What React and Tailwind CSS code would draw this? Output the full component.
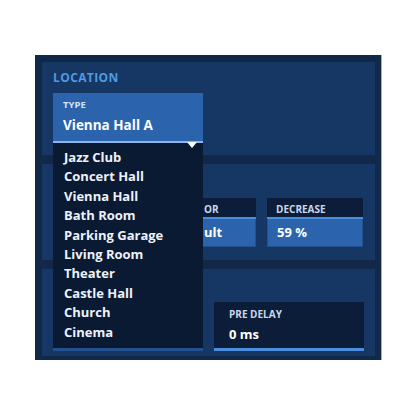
import React from "react";

const items = ["Jazz Club","Concert Hall","Vienna Hall","Bath Room","Parking Garage","Living Room","Theater","Castle Hall","Church","Cinema"];

export default function App() {
  const font = { fontFamily: "'Open Sans', 'Noto Sans', sans-serif" };
  return (
    <div className="w-[416px] h-[416px] bg-white pt-[55px] pl-[35px]" style={font}>
      <div className="w-[347px] h-[305px] bg-[#112849] border-r border-[#9fb2cc] pt-[7px] pl-[7px] pr-[6px] flex flex-col gap-[9px]">
        {/* Location */}
        <div className="h-[93px] bg-[#163663] px-[11px] pt-[9px] relative z-10">
          <div className="text-[12px] font-bold text-[#4f9ae6] leading-[14px] tracking-[0.4px]">LOCATION</div>
          <div className="relative mt-[8px] w-[150px]">
            <div className="h-[50px] bg-[#2c63ad] border-b-2 border-[#8db4e6] px-[10px] pt-[6px]">
              <div className="text-[9.5px] font-bold text-[#d5e3f5] leading-[12px]">TYPE</div>
              <div className="text-[13.5px] font-bold text-white leading-[18px] mt-[5px]">Vienna Hall A</div>
            </div>
            <div className="absolute left-0 top-[50px] w-[150px] bg-[#0b1a33] border-b-[3px] border-[#23508f] pt-[5px] pb-[6px]">
              <svg className="absolute right-[6px] top-[-1px]" width="10" height="6" viewBox="0 0 10 6">
                <polygon points="0,0 10,0 5,6" fill="#ffffff" />
              </svg>
              {items.map((it) => (
                <div key={it} className="pl-[11px] h-[19.4px] leading-[19.4px] text-[13px] font-bold text-[#edf2fa]">{it}</div>
              ))}
            </div>
          </div>
        </div>
        {/* Section 2 */}
        <div className="h-[96px] bg-[#163663] px-[11px] pt-[34px] flex gap-[11px]">
          <div className="w-[96px] h-[49px] bg-[#0c1d39]" />
          <div className="w-[96px] h-[49px] flex flex-col">
            <div className="h-[19px] bg-[#0c1d39] pl-[44px] text-[10px] font-bold text-[#c9d7ea] leading-[23px]">OR</div>
            <div className="h-[2px] bg-[#4a8ee0]" />
            <div className="flex-1 bg-[#2c63ad] border border-t-0 border-[#23508f] pl-[43px] text-[13px] font-bold text-white leading-[26px]">ult</div>
          </div>
          <div className="w-[96px] h-[49px] flex flex-col">
            <div className="h-[19px] bg-[#0c1d39] px-[9px] text-[10px] font-bold text-[#c9d7ea] leading-[23px]">DECREASE</div>
            <div className="h-[2px] bg-[#4a8ee0]" />
            <div className="flex-1 bg-[#2c63ad] border border-t-0 border-[#23508f] px-[9px] text-[13px] font-bold text-white leading-[26px]">59 %</div>
          </div>
        </div>
        {/* Section 3 */}
        <div className="h-[87px] bg-[#163663] px-[11px] pt-[33px] flex gap-[11px]">
          <div className="w-[150px] h-[49px] bg-[#0c1d39]" />
          <div className="w-[150px] h-[49px] bg-[#0c1d39] border-b-[3px] border-[#4a8ee0] px-[15px] pt-[6px]">
            <div className="text-[10px] font-bold text-[#c9d7ea] leading-[12px]">PRE DELAY</div>
            <div className="text-[13px] font-bold text-white leading-[18px] mt-[5px]">0 ms</div>
          </div>
        </div>
      </div>
    </div>
  );
}
